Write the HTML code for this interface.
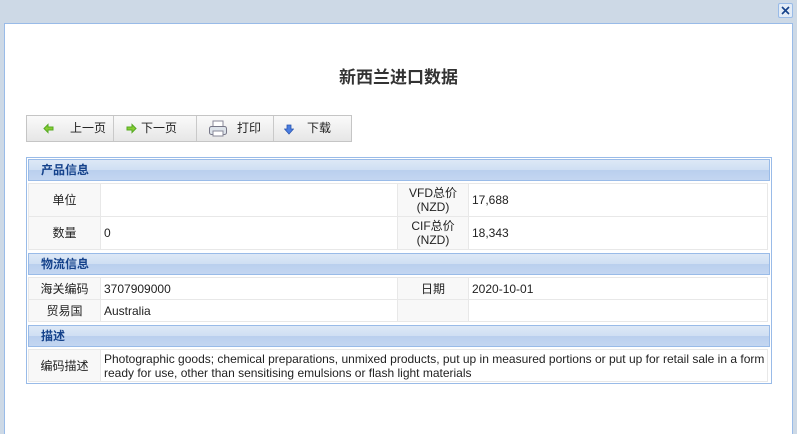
<!DOCTYPE html>
<html style="overflow:hidden;height:434px"><head><meta charset="utf-8"><style>
*{margin:0;padding:0;box-sizing:border-box}
body{width:797px;height:434px;background:#cdd9e6;position:relative;overflow:hidden;font-family:"Liberation Sans","Noto Sans CJK SC",sans-serif;font-size:12px;color:#222}
.win{position:absolute;left:4px;top:23px;width:789px;height:411px;background:#fff;border:1px solid #99bbe8;border-bottom:none}
.close{position:absolute;left:778px;top:3px;width:15px;height:15px;border:1px solid #99bbe8;background:#e3ecf7;border-radius:2px}
h1{position:absolute;left:0;width:797px;top:63px;text-align:center;font-size:17px;font-weight:bold;color:#333}
.tb{position:absolute;left:26px;top:115px;width:326px;height:27px;border:1px solid #c5c5c5;background:linear-gradient(#fafafa,#e6e6e6);display:flex}
.tb div{height:25px;border-right:1px solid #c9c9c9;position:relative;font-size:12px;line-height:25px}
.tb div:last-child{border-right:none}
.tb svg{position:absolute}
.t{position:absolute;left:26px;top:157px;width:746px;height:227px;border:1px solid #99bbe8;padding:1px}
.hd{position:absolute;left:28px;width:742px;height:22px;border:1px solid #99bbe8;background:linear-gradient(#dde8f6 0,#cfdff3 50%,#b9cfee 50%,#c3d6f1 100%);color:#15428b;font-weight:bold;font-size:12px;line-height:20px;padding-left:12px}
.c{position:absolute;border:1px solid #e8e8e8;line-height:14px;display:flex;align-items:center;padding-left:3px}
.l{background:#f8f8f8;justify-content:center;padding:0;text-align:center}
</style></head><body>
<div class="win"></div>
<div class="close"><svg width="13" height="13" viewBox="0 0 13 13"><path d="M3 3L10 10M10 3L3 10" stroke="#15428b" stroke-width="1.6"/></svg></div>
<h1>新西兰进口数据</h1>
<div class="tb">
<div style="width:87px"><svg style="left:16px;top:7px" width="11" height="11" viewBox="0 0 11 11"><path d="M1 5.5L5 1.5V4H10V7H5V9.5Z" fill="#8c3" stroke="#5a2" stroke-width="1"/></svg><span style="position:absolute;left:43px">上一页</span></div>
<div style="width:83px"><svg style="left:12px;top:7px" width="11" height="11" viewBox="0 0 11 11"><path d="M10 5.5L6 1.5V4H1V7H6V9.5Z" fill="#8c3" stroke="#5a2" stroke-width="1"/></svg><span style="position:absolute;left:27px">下一页</span></div>
<div style="width:77px"><svg style="left:11px;top:4px" width="20" height="17" viewBox="0 0 20 17"><rect x="5" y="1" width="10" height="7" fill="#fff" stroke="#889"/><rect x="1.5" y="6.5" width="17" height="8" rx="2" fill="#dde3ea" stroke="#778"/><rect x="5" y="11" width="10" height="5" fill="#fff" stroke="#889"/></svg><span style="position:absolute;left:40px">打印</span></div>
<div style="width:77px"><svg style="left:10px;top:8px" width="10" height="11" viewBox="0 0 10 11"><path d="M3 1H7V5H9.5L5 10L0.5 5H3Z" fill="#4a7de0" stroke="#2a55b0" stroke-width="0.8"/></svg><span style="position:absolute;left:33px">下载</span></div>
</div>
<div class="t"></div>
<div class="hd" style="top:159px">产品信息</div>
<div class="c l" style="left:28px;top:183px;width:73px;height:34px">单位</div>
<div class="c" style="left:100px;top:183px;width:298px;height:34px"></div>
<div class="c l" style="left:397px;top:183px;width:72px;height:34px">VFD总价<br>(NZD)</div>
<div class="c" style="left:468px;top:183px;width:300px;height:34px">17,688</div>
<div class="c l" style="left:28px;top:216px;width:73px;height:34px">数量</div>
<div class="c" style="left:100px;top:216px;width:298px;height:34px">0</div>
<div class="c l" style="left:397px;top:216px;width:72px;height:34px">CIF总价<br>(NZD)</div>
<div class="c" style="left:468px;top:216px;width:300px;height:34px">18,343</div>
<div class="hd" style="top:253px">物流信息</div>
<div class="c l" style="left:28px;top:277px;width:73px;height:23px">海关编码</div>
<div class="c" style="left:100px;top:277px;width:298px;height:23px">3707909000</div>
<div class="c l" style="left:397px;top:277px;width:72px;height:23px">日期</div>
<div class="c" style="left:468px;top:277px;width:300px;height:23px">2020-10-01</div>
<div class="c l" style="left:28px;top:299px;width:73px;height:23px">贸易国</div>
<div class="c" style="left:100px;top:299px;width:298px;height:23px">Australia</div>
<div class="c l" style="left:397px;top:299px;width:72px;height:23px"></div>
<div class="c" style="left:468px;top:299px;width:300px;height:23px"></div>
<div class="hd" style="top:325px">描述</div>
<div class="c l" style="left:28px;top:349px;width:73px;height:33px">编码描述</div>
<div class="c" style="left:100px;top:349px;width:668px;height:33px">Photographic goods; chemical preparations, unmixed products, put up in measured portions or put up for retail sale in a form ready for use, other than sensitising emulsions or flash light materials</div>
</body></html>
